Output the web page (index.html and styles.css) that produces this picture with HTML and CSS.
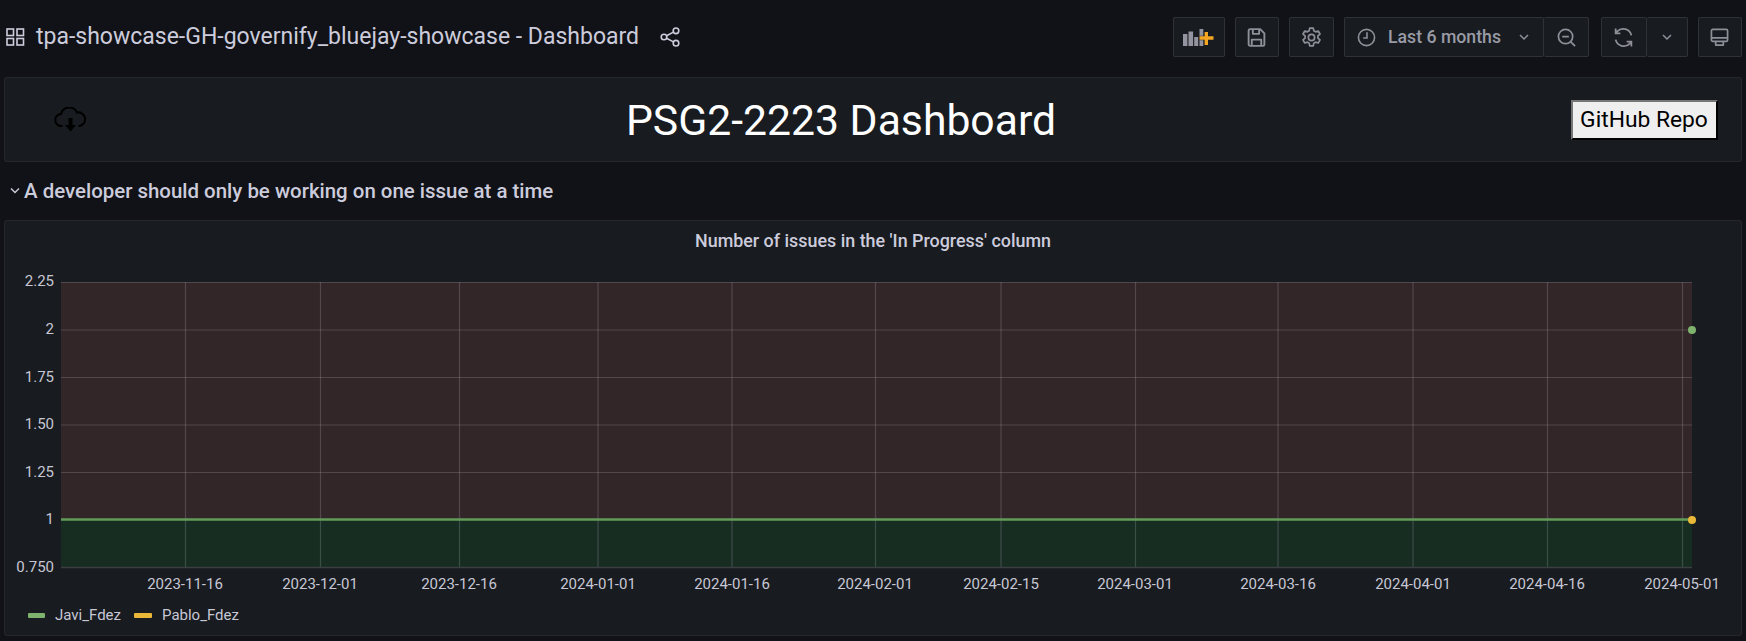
FILE: index.html
```html
<!DOCTYPE html>
<html lang="en">
<head>
<meta charset="utf-8">
<title>PSG2-2223 Dashboard</title>
<link rel="stylesheet" href="styles.css">
</head>
<body>
<header class="topbar">
  <svg class="ico-apps" viewBox="0 0 19 18"><g fill="none" stroke="#ccccdc" stroke-width="1.6"><rect x="1" y="1" width="6.5" height="6.5"/><rect x="11" y="1" width="6.5" height="6.5"/><rect x="1" y="10.5" width="6.5" height="6.5"/><rect x="11" y="10.5" width="6.5" height="6.5"/></g></svg>
  <h1 class="dash-title">tpa-showcase-GH-governify_bluejay-showcase - Dashboard</h1>
  <svg class="ico-share" viewBox="0 0 20 20"><g fill="none" stroke="#ccccdc" stroke-width="1.6"><circle cx="4" cy="10" r="2.8"/><circle cx="16" cy="3.8" r="2.8"/><circle cx="16" cy="16.2" r="2.8"/><path d="M6.6 8.7 13.4 5.1M6.6 11.3l6.8 3.6"/></g></svg>
  <div class="toolbar">
    <button class="tbtn w-add"><svg class="ico-add" viewBox="0 0 31 17"><g fill="#93949f"><rect x="0" y="5" width="4.4" height="12"/><rect x="5.500" y="2.500" width="4.600" height="14.500"/><rect x="11.200" y="8" width="4" height="9"/><rect x="16.500" y="0" width="3.800" height="17"/></g><path d="M25 3v4.300h5.500v3.400H25V16h-3.400v-5.300H16.500V7.300h5.100V3z" fill="#f5a623" stroke="#181b1f" stroke-width="1" paint-order="stroke"/></svg></button>
    <button class="tbtn w-save"><svg class="ico ico-lg" viewBox="0 0 20 20"><g fill="none" stroke="#8e8f99" stroke-width="1.800" stroke-linejoin="round"><path d="M2.500 3.500a1.500 1.500 0 0 1 1.500-1.500H13.500l4 4v10.500a1.500 1.500 0 0 1-1.500 1.500H4a1.500 1.500 0 0 1-1.500-1.500z"/><path d="M6.500 2v4.500h6V2M5.500 18v-6h9v6"/></g></svg></button>
    <button class="tbtn w-cog"><svg class="ico ico-lg" viewBox="0 0 20 20"><g fill="none" stroke="#8e8f99" stroke-width="1.600" stroke-linejoin="round"><circle cx="10" cy="10" r="3"/><path d="M8.300 1h3.400l.5 2.600 1.700 1 2.500-.8 1.700 2.900-2 1.800v2l2 1.800-1.700 2.900-2.500-.8-1.700 1-.5 2.600H8.300l-.5-2.600-1.700-1-2.500.8-1.700-2.900 2-1.800v-2l-2-1.800 1.700-2.900 2.500.8 1.700-1z"/></g></svg></button>
    <div class="tgroup">
      <button class="tbtn w-time">
        <svg class="ico" viewBox="0 0 20 20"><g fill="none" stroke="#8e8f99" stroke-width="1.700"><circle cx="10" cy="10" r="8.500"/><path d="M10.500 4.500v6H6.500"/></g></svg>
        <span class="time-label">Last 6 months</span>
        <svg class="ico-chev" viewBox="0 0 12 8"><path d="M2 2l4 4 4-4" fill="none" stroke="#8e8f99" stroke-width="1.500"/></svg>
      </button>
      <button class="tbtn w-zoom"><svg class="ico" viewBox="0 0 20 20"><g fill="none" stroke="#8e8f99" stroke-width="1.800"><circle cx="9" cy="9" r="7.500"/><path d="M5.500 9h7M14.500 14.500 19 19"/></g></svg></button>
    </div>
    <div class="tgroup">
      <button class="tbtn w-sync"><svg class="ico ico-lg" viewBox="0 0 20 20"><g fill="none" stroke="#8e8f99" stroke-width="1.700"><path d="M17.500 8A8 8 0 0 0 4 4.200L2.500 6M2.500 1.500V6H7M2.500 12A8 8 0 0 0 16 15.800L17.500 14M17.500 18.500V14H13"/></g></svg></button>
      <button class="tbtn w-chev"><svg class="ico-chev" viewBox="0 0 12 8"><path d="M2 2l4 4 4-4" fill="none" stroke="#8e8f99" stroke-width="1.500"/></svg></button>
    </div>
    <button class="tbtn w-mon"><svg class="ico" viewBox="0 0 20 20"><g fill="none" stroke="#8e8f99" stroke-width="1.800" stroke-linejoin="round"><rect x="1.500" y="1.500" width="17" height="12.500" rx="1.500"/><path d="M1.500 10.500h17M6 14v4h8v-4"/></g></svg></button>
  </div>
</header>

<section class="panel text-panel">
  <svg class="ico-cloud" viewBox="0 0 32 25"><g fill="none" stroke="#000" stroke-width="2"><path d="M8 19H7a6 6 0 0 1-.5-12A8.500 8.500 0 0 1 22.500 5.500 6.800 6.800 0 0 1 25 19h-1"/></g><path d="M14 11h4v7h3.500L16 24.500 10.500 18H14z" fill="#000"/></svg>
  <h2 class="big-title">PSG2-2223 Dashboard</h2>
  <button class="repo-btn">GitHub Repo</button>
</section>

<div class="row-title">
  <svg class="ico-row" viewBox="0 0 10 7"><path d="M1 1.500l4 4 4-4" fill="none" stroke="#ccccdc" stroke-width="1.400"/></svg>
  <span>A developer should only be working on one issue at a time</span>
</div>

<section class="panel chart-panel">
  <div class="chart-title">Number of issues in the 'In Progress' column</div>
  <svg class="chart" viewBox="5 259 1736 340">
    <rect class="zone-red" x="61" y="282" width="1631" height="238"/>
    <rect class="zone-green" x="61" y="520" width="1631" height="48"/>
    <g class="grid">
      <path d="M61 282.500H1692M61 330H1692M61 377.500H1692M61 425H1692M61 472.500H1692"/>
      <path d="M185.500 282V568M320.500 282V568M459.500 282V568M598 282V568M732 282V568M875.500 282V568M1001 282V568M1135.500 282V568M1278 282V568M1413 282V568M1547.500 282V568M1682.500 282V568"/>
    </g>
    <path class="axis" d="M61 567.500H1692"/>
    <path class="serie" d="M61 519.500H1692"/>
    <circle cx="1692" cy="330" r="4" fill="#7eb26d"/>
    <circle cx="1692" cy="520" r="4" fill="#eab839"/>
    <g class="ylabels">
      <text x="54" y="286">2.25</text>
      <text x="54" y="334">2</text>
      <text x="54" y="382">1.75</text>
      <text x="54" y="429">1.50</text>
      <text x="54" y="477">1.25</text>
      <text x="54" y="524">1</text>
      <text x="54" y="572">0.750</text>
    </g>
    <g class="xlabels">
      <text x="185" y="589">2023-11-16</text>
      <text x="320" y="589">2023-12-01</text>
      <text x="459" y="589">2023-12-16</text>
      <text x="598" y="589">2024-01-01</text>
      <text x="732" y="589">2024-01-16</text>
      <text x="875" y="589">2024-02-01</text>
      <text x="1001" y="589">2024-02-15</text>
      <text x="1135" y="589">2024-03-01</text>
      <text x="1278" y="589">2024-03-16</text>
      <text x="1413" y="589">2024-04-01</text>
      <text x="1547" y="589">2024-04-16</text>
      <text x="1682" y="589">2024-05-01</text>
    </g>
  </svg>
  <div class="legend">
    <span class="swatch sw-green"></span><span class="leg-name">Javi_Fdez</span>
    <span class="swatch sw-yellow"></span><span class="leg-name">Pablo_Fdez</span>
  </div>
</section>
</body>
</html>
```
FILE: styles.css
```css
* { box-sizing: border-box; }
html, body { margin: 0; height: 100%; }
body {
  background: #111217;
  color: #ccccdc;
  font-family: Roboto, "Liberation Sans", sans-serif;
  overflow: hidden;
  padding: 0 4px;
}
.topbar {
  height: 77px;
  display: flex;
  align-items: center;
  padding: 0 0.500px 3px 2px;
}
.ico-apps { width: 19px; height: 18px; flex: none; }
.dash-title {
  margin: 0 0 0 11px;
  font-size: 23px;
  font-weight: 400;
  line-height: 28px;
  white-space: nowrap;
}
.ico-share { width: 20px; height: 20px; margin-left: 21px; flex: none; }
.toolbar {
  margin-left: auto;
  display: flex;
  align-items: center;
  gap: 10.500px;
}
.tgroup { display: flex; }
.tbtn {
  height: 40px;
  display: flex;
  align-items: center;
  justify-content: center;
  background: #181b1f;
  border: 1px solid rgba(204, 204, 220, .13);
  border-radius: 2px;
  padding: 0;
  color: #9a9ba6;
  font-family: inherit;
}
.w-add { width: 51.500px; }
.w-save { width: 43.500px; }
.w-cog { width: 44.500px; }
.w-time { width: 200px; justify-content: flex-start; padding-left: 12px; }
.w-zoom { width: 45px; border-left: 0; }
.w-sync { width: 46px; }
.w-chev { width: 41px; border-left: 0; }
.w-mon { width: 43.500px; }
.tgroup + .tgroup { margin-left: 1px; }
.ico { width: 19px; height: 19px; flex: none; }
.ico-lg { width: 21px; height: 21px; }
.ico-add { width: 31px; height: 17px; }
.ico-chev { width: 12px; height: 8px; flex: none; }
.time-label {
  margin: 0 17px 0 12px;
  font-size: 17.700px;
  font-weight: 500;
  white-space: nowrap;
}
.panel {
  background: #181b1f;
  border: 1px solid rgba(204, 204, 220, .07);
  border-radius: 3px;
}
.text-panel {
  height: 85px;
  display: flex;
  align-items: center;
  justify-content: space-between;
  padding: 0 23.500px 0 48.500px;
}
.ico-cloud { width: 33px; height: 25px; flex: none; }
.big-title {
  margin: 0 0 0 25px;
  font-size: 42.700px;
  font-weight: 400;
  color: #fff;
  white-space: nowrap;
}
.repo-btn {
  height: 40px;
  width: 147px;
  padding: 0;
  background: #efefef;
  border: 2px solid;
  border-color: #767676 #000 #000 #767676;
  border-radius: 0;
  color: #000;
  font-family: inherit;
  font-size: 22.800px;
}
.row-title {
  height: 58px;
  display: flex;
  align-items: center;
  padding-left: 5.500px;
  font-size: 20.450px;
  font-weight: 500;
  padding-bottom: 1px;
}
.ico-row { width: 10px; height: 7px; margin-right: 4.500px; flex: none; }
.chart-panel { height: 416px; }
.chart-title {
  height: 38px;
  text-align: center;
  font-size: 17.900px;
  font-weight: 500;
  line-height: 40px;
}
.chart { display: block; width: 1736px; height: 340px; }
.zone-red { fill: #332629; }
.zone-green { fill: #182d22; }
.grid path { fill: none; stroke: rgba(204, 204, 220, .2); stroke-width: 1.200; }
.axis { stroke: #3b3e42; stroke-width: 1.500; fill: none; }
.serie { stroke: #639c58; stroke-width: 2.500; fill: none; }
.chart text { fill: #c7c7d5; font-size: 15px; font-family: Roboto, "Liberation Sans", sans-serif; }
.ylabels text { text-anchor: end; }
.xlabels text { text-anchor: middle; }
.legend {
  display: flex;
  align-items: center;
  height: 32px;
  padding: 0 0 0 23px;
  font-size: 15px;
  color: #c7c7d5;
}
.swatch { width: 17px; height: 5px; border-radius: 1px; flex: none; }
.sw-green { background: #7eb26d; }
.sw-yellow { background: #eab839; width: 18px; }
.leg-name { margin: 0 13px 0 10px; }
```
